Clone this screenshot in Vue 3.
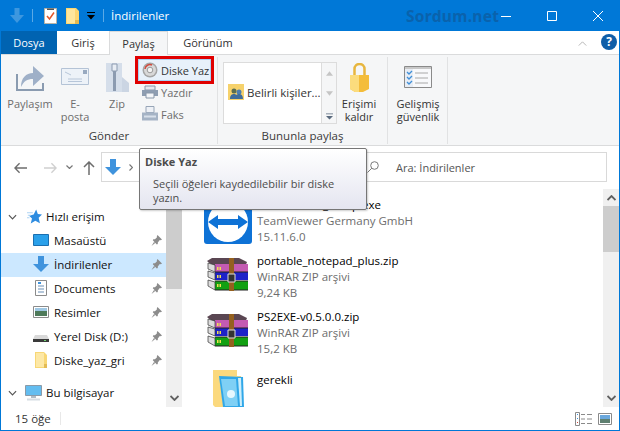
<script setup>
const sideRows = [
  { key: 'desk', label: 'Masaüstü', pin: true },
  { key: 'down', label: 'İndirilenler', pin: true, active: true },
  { key: 'docs', label: 'Documents', pin: true },
  { key: 'pics', label: 'Resimler', pin: true },
  { key: 'disk', label: 'Yerel Disk (D:)', pin: true },
  { key: 'fold', label: 'Diske_yaz_gri', pin: true }
]
const files = [
  { key: 'tv', name: 'TeamViewer_Setup.exe', lines: ['TeamViewer Germany GmbH', '15.11.6.0'] },
  { key: 'rar', name: 'portable_notepad_plus.zip', lines: ['WinRAR ZIP arşivi', '9,24 KB'] },
  { key: 'rar', name: 'PS2EXE-v0.5.0.0.zip', lines: ['WinRAR ZIP arşivi', '15,2 KB'] },
  { key: 'dir', name: 'gerekli', lines: [] }
]
</script>

<template>
  <div class="window">
    <header class="titlebar">
      <svg class="qa qa-arrow" viewBox="0 0 14 15"><path d="M4.500 0h5v7H14L7 15 0 7h4.500z" fill="#3d97df"/></svg>
      <span class="qa-sep"></span>
      <svg class="qa qa-note" viewBox="0 0 13 16"><path d="M.5.5h12v15H.5z" fill="#fff" stroke="#b9b4a8"/><path d="M3 8l2.500 3L10 4.500" fill="none" stroke="#e2572b" stroke-width="1.500"/><path d="M3 .5h7v1.500H3z" fill="#555"/></svg>
      <svg class="qa qa-folder" viewBox="0 0 13 16"><path d="M0 0h10l3 3v13H0z" fill="#fcd671"/><path d="M1 1h8v14H1z" fill="#fde69d"/><path d="M9 12h4v4H9z" fill="#e5b84f"/></svg>
      <svg class="qa qa-drop" viewBox="0 0 8 8"><path d="M0 0h8v1H0zM0 3h8L4 7.500z" fill="#000"/></svg>
      <span class="qa-sep second"></span>
      <span class="title">İndirilenler</span>
      <span class="brand">Sordum.net</span>
      <div class="controls">
        <svg class="ctl" viewBox="0 0 46 30"><path d="M18 15.500h10" stroke="#fff" fill="none"/></svg>
        <svg class="ctl" viewBox="0 0 46 30"><path d="M18.500 10.500h9v9h-9z" stroke="#fff" fill="none"/></svg>
        <svg class="ctl" viewBox="0 0 46 30"><path d="M18 10l10 10M28 10L18 20" stroke="#fff" fill="none"/></svg>
      </div>
    </header>

    <nav class="tabs">
      <span class="tab tab-file">Dosya</span>
      <span class="tab giris">Giriş</span>
      <span class="tab current">Paylaş</span>
      <span class="tab gorunum">Görünüm</span>
      <svg class="collapse" viewBox="0 0 10 6"><path d="M.5 5.500L5 1l4.500 4.500" fill="none" stroke="#a9a9a9"/></svg>
      <span class="help">?</span>
    </nav>

    <section class="ribbon">
      <div class="group send">
        <div class="group-body">
          <div class="big dim w-share">
            <svg class="big-ic share" viewBox="0 0 28 28"><path d="M1 11v16h26v-7" fill="none" stroke="#8a9bb0" stroke-width="2"/><path d="M5 24c0-9 5-14 12-14V3l11 10-11 10v-7c-6 0-9 2-12 8z" fill="#9fb0c8"/></svg>
            <span>Paylaşım</span>
          </div>
          <div class="big dim w-mail">
            <svg class="big-ic mail" viewBox="0 0 28 17"><path d="M.5.500h27v16H.5z" fill="#edf2f8" stroke="#b4c3d6"/><path d="M22 2h4v4h-4z" fill="#98a9c0"/><path d="M4 4l6 3M7 11h14M7 13.500h14" stroke="#b7c6d9" fill="none"/></svg>
            <span>E-<br>posta</span>
          </div>
          <div class="big dim w-zip">
            <svg class="big-ic zip" viewBox="0 0 23 29"><path d="M0 0h16v29H0z" fill="#d5deea"/><path d="M16 14l7 6v9h-7z" fill="#cbd5e3"/><path d="M7 1h3v27H7z" fill="#8c9bb0"/><path d="M6 1h5v7H6z" fill="#e8edf4" stroke="#8c9bb0"/></svg>
            <span>Zip</span>
          </div>
          <div class="small-col">
            <div class="burn-frame">
              <div class="burn">
                <svg class="small-ic" viewBox="0 0 16 16"><circle cx="8" cy="8" r="7.500" fill="#a5a5a5"/><circle cx="8" cy="8" r="6" fill="#d8d8d8"/><path d="M3 7a5 5 0 0 1 7-4" fill="none" stroke="#d04a3e" stroke-width="1.500"/><circle cx="8" cy="8" r="2.800" fill="#f3f3f3" stroke="#999"/></svg>
                <span>Diske Yaz</span>
              </div>
            </div>
            <div class="small dim first">
              <svg class="small-ic" viewBox="0 0 16 14"><path d="M3 1h10v4H3z" fill="#e4e9f0" stroke="#8896a8"/><path d="M0 5h16v6H0z" fill="#8e9db1"/><path d="M4 8h8v5H4z" fill="#f3f5f8" stroke="#8896a8"/></svg>
              <span>Yazdır</span>
            </div>
            <div class="small dim">
              <svg class="small-ic" viewBox="0 0 16 15"><path d="M4 0h8v6H4z" fill="#eef1f6" stroke="#97a5b7"/><path d="M0 6h16v8H0z" fill="#a5b3c5"/><path d="M2 9h12v2H2z" fill="#d8e0ea"/></svg>
              <span>Faks</span>
            </div>
          </div>
        </div>
        <div class="group-label">Gönder</div>
      </div>

      <div class="group people">
        <div class="group-body">
          <div class="gallery">
            <div class="gallery-main">
              <svg class="small-ic" viewBox="0 0 16 16"><path d="M0 0h16v16H0z" fill="#f6d26c"/><circle cx="6" cy="7" r="2.500" fill="#5b6e50"/><circle cx="11" cy="8" r="2.500" fill="#4c7db0"/><path d="M2 15c0-4 2-5 4-5s3 1 3 5zM7 15c0-4 2-5 4-5s4 1 4 5z" fill="#3e6c9c"/></svg>
              <span>Belirli kişiler...</span>
            </div>
            <div class="gallery-scroll">
              <svg viewBox="0 0 8 5" class="gs"><path d="M4 0l4 5H0z" fill="#c5c5c5"/></svg>
              <svg viewBox="0 0 8 5" class="gs"><path d="M0 0h8L4 5z" fill="#c5c5c5"/></svg>
              <svg viewBox="0 0 8 7" class="gs last"><path d="M0 0h8v1H0zM0 3h8L4 7z" fill="#5a6a7e"/></svg>
            </div>
          </div>
          <div class="big w-lock">
            <svg class="big-ic lock" viewBox="0 0 19 29"><path d="M4.500 13V6a5 5 0 0 1 10 0v7" fill="none" stroke="#e7b63f" stroke-width="2.500"/><path d="M0 12h19v14l-6 3H5l-5-3z" fill="#f4bd3b"/><path d="M0 12h9v17H5l-5-3z" fill="#fbdc7d"/></svg>
            <span>Erişimi<br>kaldır</span>
          </div>
        </div>
        <div class="group-label">Bununla paylaş</div>
      </div>

      <div class="group security">
        <div class="group-body">
          <div class="big w-sec">
            <svg class="big-ic sec" viewBox="0 0 28 22"><path d="M.5.500h27v21H.5z" fill="#f8f9fb" stroke="#8a8a8a"/><path d="M1 1h26v2H1z" fill="#c8c8c8"/><path d="M1 3h8v18H1z" fill="#e8edf4"/><path d="M3 6l2 2 3-3M3 11l2 2 3-3M3 16l2 2 3-3" fill="none" stroke="#3f8fd8" stroke-width="1.300"/><path d="M11 7h13M11 12h13M11 17h13" stroke="#a8a8a8"/></svg>
            <span>Gelişmiş<br>güvenlik</span>
          </div>
        </div>
        <div class="group-label"></div>
      </div>
    </section>

    <div class="navbar">
      <svg class="nav-ic back" viewBox="0 0 14 12"><path d="M6 1L1 6l5 5M1 6h13" fill="none" stroke="#6d6d6d" stroke-width="1.500"/></svg>
      <svg class="nav-ic fwd" viewBox="0 0 14 12"><path d="M8 1l5 5-5 5M13 6H0" fill="none" stroke="#d0d0d0" stroke-width="1.500"/></svg>
      <svg class="nav-chev" viewBox="0 0 7 4"><path d="M.5.500L3.500 3.500 6.500.5" fill="none" stroke="#777" stroke-width="1.200"/></svg>
      <svg class="nav-ic up" viewBox="0 0 12 14"><path d="M1 6l5-5 5 5M6 1v13" fill="none" stroke="#6d6d6d" stroke-width="1.500"/></svg>
      <div class="address">
        <svg class="addr-arrow" viewBox="0 0 16 16"><path d="M5 0h6v8h5l-8 8-8-8h5z" fill="#3f93dd"/></svg>
        <svg class="addr-chev" viewBox="0 0 4 7"><path d="M.5.500l3 3-3 3" fill="none" stroke="#777" stroke-width="1.200"/></svg>
      </div>
      <div class="search">
        <svg class="search-ic" viewBox="0 0 12 12"><circle cx="7.500" cy="4.500" r="3.800" fill="none" stroke="#7a7a7a"/><path d="M4.800 7.200L.5 11.500" stroke="#7a7a7a" fill="none"/></svg>
        <span>Ara: İndirilenler</span>
      </div>
    </div>

    <main class="content">
      <aside class="sidebar">
        <div class="tree">
          <div class="row head">
            <svg class="twist" viewBox="0 0 10 6"><path d="M1 1l4 4 4-4" fill="none" stroke="#555" stroke-width="1.300"/></svg>
            <svg class="ic-star" viewBox="0 0 18 17"><path d="M11 0l2 5.500 5 .5-4 4 1.500 6.500L10 13.500 4.500 17 6 11 2.500 7.500 8 6z" fill="#2e8ce0"/><path d="M0 4h7M1 7h4M0 10h3" stroke="#9ccbf2"/></svg>
            <span class="hl">Hızlı erişim</span>
          </div>
          <div v-for="r in sideRows" :key="r.key" class="row item" :class="{ active: r.active }">
            <span class="ic-box">
              <svg v-if="r.key === 'desk'" class="ic" viewBox="0 0 16 16"><path d="M.5 2.500h15v11H.5z" fill="#2aa0ea" stroke="#1b6fb0"/></svg>
              <svg v-else-if="r.key === 'down'" class="ic" viewBox="0 0 16 16"><path d="M5 0h6v8h5l-8 8-8-8h5z" fill="#3f93dd"/></svg>
              <svg v-else-if="r.key === 'docs'" class="ic" viewBox="0 0 16 16"><path d="M2.500.5h11v15h-11z" fill="#fff" stroke="#8b8b8b"/><path d="M5 6h6M5 9h6M5 12h6" stroke="#6b8fb5"/><path d="M5 2h3v2H5z" fill="#3f93dd"/></svg>
              <svg v-else-if="r.key === 'pics'" class="ic" viewBox="0 0 16 16"><path d="M.5 2.500h15v11H.5z" fill="#fff" stroke="#8b8b8b"/><path d="M2 4h12v3H2z" fill="#9fc8e4"/><path d="M2 7h12v5H2z" fill="#4e7a5a"/></svg>
              <svg v-else-if="r.key === 'disk'" class="ic" viewBox="0 0 16 16"><path d="M2 7h12l2 4H0z" fill="#d9d9d9"/><path d="M0 11h16v3H0z" fill="#3a3a3a"/><path d="M11 12h2v1h-2z" fill="#6fd36f"/></svg>
              <svg v-else class="ic" viewBox="0 0 16 16"><path d="M2 0h9l3 3v13H2z" fill="#f8d775"/><path d="M3 1h8v14H3z" fill="#fde8a6"/><path d="M11 12h3v4h-3z" fill="#e3bb54"/></svg>
            </span>
            <span class="lbl">{{ r.label }}</span>
            <svg class="pin" viewBox="0 0 11 11"><path d="M6.500 0L11 4.500 9.800 5.200 8.800 5 6.800 7.500 6.800 9 5.800 9.500 1.800 5.300 2.300 4.300 4 4.200 6 2.200 5.800 1.200zM3 7l1.200 1L.5 11z" fill="#8c8c8c"/></svg>
          </div>
          <div class="row head pc">
            <svg class="twist" viewBox="0 0 10 6"><path d="M1 1l4 4 4-4" fill="none" stroke="#555" stroke-width="1.300"/></svg>
            <svg class="ic-pc" viewBox="0 0 18 16"><path d="M.5.500h16v10H.5z" fill="#63bdf0" stroke="#8a9aa8"/><path d="M6 11h5v2H6z" fill="#b0bcc6"/><path d="M2 13.500h13v2H2z" fill="#d5dce2"/></svg>
            <span class="hl">Bu bilgisayar</span>
          </div>
        </div>
        <div class="vscroll side-scroll">
          <svg class="arrow-up" viewBox="0 0 9 6"><path d="M.5 5L4.500 1l4 4" fill="none" stroke="#606060" stroke-width="1.800"/></svg>
          <div class="thumb"></div>
          <svg class="arrow-dn" viewBox="0 0 9 6"><path d="M.5 1l4 4 4-4" fill="none" stroke="#606060" stroke-width="1.800"/></svg>
        </div>
      </aside>

      <section class="files">
        <div class="file-list">
          <article v-for="f in files" :key="f.name" class="entry" :class="'kind-' + f.key">
            <div class="file-ic">
              <svg v-if="f.key === 'tv'" class="tv" viewBox="0 0 48 48"><rect width="48" height="48" rx="3" fill="#0e72d6"/><circle cx="24" cy="26" r="20" fill="#fff"/><path d="M4 26l10-7v4h20v-4l10 7-10 7v-4H14v4z" fill="#0e72d6"/></svg>
              <svg v-else-if="f.key === 'rar'" class="rar" viewBox="0 0 42 34"><path d="M0 4l5-3h27l8 4-2 5H7z" fill="#5a4652"/><path d="M8 7h33v8H8z" fill="#c45bb2"/><path d="M8 15h33v8H8z" fill="#1d22c8"/><path d="M8 24h33v9H8z" fill="#12a012"/><path d="M8 15h33M8 24h33M8 33h33" stroke="#222"/><path d="M1 6l7 2v7L1 12zM1 14l7 2v7l-7-3zM1 23l7 2v8l-7-4z" fill="#dcdcdc" stroke="#333" stroke-width=".7"/><path d="M22 1h5v33h-5z" fill="#94601f"/><path d="M21 17h7v8h-7z" fill="#333" stroke="#ddd"/><path d="M10 10h1.500v3H10zM12.500 10H14v3h-1.500zM10 18h1.500v3H10zM12.500 18H14v3h-1.500zM10 27h1.500v3H10zM12.500 27H14v3h-1.500z" fill="#f0e050"/></svg>
              <svg v-else class="dir" viewBox="0 0 31 37"><path d="M0 0h24v6h4v31H2L0 35z" fill="#fbd97e"/><path d="M6 6l24 1 1 30H10z" fill="#30a7e8"/><path d="M8 9h15l2 27H12z" fill="#7fd0f5"/><path d="M25 8h3l1 28h-2z" fill="#cdeefb"/><circle cx="18" cy="24" r="4" fill="#e6f7fe"/></svg>
            </div>
            <div class="file-text">
              <div class="name">{{ f.name }}</div>
              <div v-for="l in f.lines" :key="l" class="meta">{{ l }}</div>
            </div>
          </article>
        </div>
        <div class="vscroll main-scroll">
          <svg class="arrow-up" viewBox="0 0 9 6"><path d="M.5 5L4.500 1l4 4" fill="none" stroke="#606060" stroke-width="1.800"/></svg>
          <div class="thumb"></div>
          <svg class="arrow-dn" viewBox="0 0 9 6"><path d="M.5 1l4 4 4-4" fill="none" stroke="#606060" stroke-width="1.800"/></svg>
        </div>
      </section>
    </main>

    <footer class="status">
      <span class="count">15 öğe</span>
      <span class="status-sep"></span>
      <svg class="view v1" viewBox="0 0 17 14"><path d="M.5.500h4v13h-4z" fill="#fff" stroke="#8a8a8a"/><path d="M2 2h1v1H2zM2 6h1v1H2z" fill="#3f93dd"/><path d="M2 10h1v1H2z" fill="#d04a3e"/><path d="M6 2.500h4M12 2.500h5M6 7h4M12 7h5M6 11.500h4M12 11.500h5" stroke="#8a8a8a"/></svg>
      <svg class="view v2" viewBox="0 0 14 12"><path d="M.5.500h13v11H.5z" fill="#fff" stroke="#8a8a8a"/><path d="M2 2h10v4H2z" fill="#6aa7dc"/><path d="M2 6h10v4H2z" fill="#5f7f70"/></svg>
    </footer>

    <div class="tooltip">
      <div class="tip-title">Diske Yaz</div>
      <div class="tip-body">Seçili öğeleri kaydedilebilir bir diske<br>yazın.</div>
    </div>
  </div>
</template>

<style scoped>
.window {
  position: relative;
  width: 620px;
  height: 431px;
  box-sizing: border-box;
  border: 1px solid #0078d7;
  border-top: 0;
  display: flex;
  flex-direction: column;
  overflow: hidden;
  background: #fff;
  font-family: "Open Sans", "Noto Sans", sans-serif;
  font-size: 11.5px;
  color: #1a1a1a;
}
.titlebar {
  height: 31px;
  flex: none;
  background: #0078d7;
  display: flex;
  align-items: center;
  margin: 0 -1px;
  color: #fff;
}
.qa { display: block; flex: none; }
.qa-arrow { width: 14px; height: 15px; margin-left: 10px; }
.qa-sep { width: 1px; height: 13px; background: #5aa9e6; margin-left: 8px; flex: none; }
.qa-note { width: 13px; height: 16px; margin-left: 11px; }
.qa-folder { width: 13px; height: 16px; margin-left: 9px; }
.qa-drop { width: 8px; height: 8px; margin-left: 8px; }
.qa-sep.second { margin-left: 8px; }
.title { margin-left: 7px; font-size: 11.5px; width: 62px; flex: none; white-space: nowrap; }
.brand {
  margin-left: 233px;
  font-size: 15.500px;
  font-weight: 700;
  color: #0a62ac;
  font-family: "Noto Sans", sans-serif;
  letter-spacing: .3px;
  width: 77px;
  flex: none;
  white-space: nowrap;
}
.controls { display: flex; margin-left: auto; flex: none; }
.ctl { width: 46px; height: 30px; display: block; }
.tabs {
  height: 24px;
  flex: none;
  display: flex;
  align-items: stretch;
  border-bottom: 1px solid #dadbdc;
  box-sizing: border-box;
  font-size: 11px;
}
.tab { display: flex; align-items: center; justify-content: center; color: #333; }
.tab-file { width: 56px; height: 23px; background: #0063b1; color: #fff; }
.giris { width: 52px; }
.current {
  width: 59px;
  box-sizing: border-box;
  height: 24px;
  background: #f5f6f7;
  border: 1px solid #dadbdc;
  border-bottom: 0;
}
.gorunum { width: 80px; }
.collapse { width: 9px; height: 5px; margin: 10px 0 0 auto; }
.help {
  width: 16px;
  height: 16px;
  border-radius: 50%;
  background: #0f5ea8;
  color: #fff;
  font: 700 12px/16px "Open Sans", sans-serif;
  text-align: center;
  margin: 3px 2px 0 14px;
}
.ribbon {
  height: 91px;
  flex: none;
  box-sizing: border-box;
  background: #f5f6f7;
  border-bottom: 1px solid #dadbdc;
  display: flex;
  padding-top: 2px;
}
.group {
  display: flex;
  flex-direction: column;
  border-right: 1px solid #e1e2e3;
  box-sizing: border-box;
  height: 87px;
}
.send { width: 217px; }
.people { width: 170px; }
.security { width: 60px; }
.group-body { flex: 1; display: flex; min-height: 0; }
.group-label { height: 16px; line-height: 16px; text-align: center; color: #3b3b3b; font-size: 11.5px; flex: none; }
.big {
  display: flex;
  flex-direction: column;
  align-items: center;
  text-align: center;
  line-height: 13px;
  padding-top: 6px;
  box-sizing: border-box;
  color: #333;
  font-size: 11px;
  flex: none;
}
.big span { margin-top: auto; height: 31px; white-space: nowrap; }
.dim { color: #6d6d6d; }
.big-ic { display: block; flex: none; }
.w-share { width: 58px; }
.w-mail { width: 32px; }
.w-zip { width: 26px; margin-left: 13px; }
.share { width: 28px; height: 28px; }
.mail { width: 28px; height: 17px; margin-top: 5px; }
.zip { width: 23px; height: 29px; }
.small-col { width: 80px; margin-left: 5px; font-size: 11px; flex: none; }
.burn-frame {
  width: 79px;
  height: 28px;
  box-sizing: border-box;
  border: 3px solid #e00000;
  margin-top: -1px;
}
.burn {
  height: 22px;
  box-sizing: border-box;
  background: #e8f1fa;
  border: 1px solid #a9d1f2;
  display: flex;
  align-items: center;
  gap: 3px;
  padding-left: 3px;
  color: #333;
  white-space: nowrap;
}
.small {
  display: flex;
  align-items: center;
  gap: 3px;
  height: 22px;
  padding-left: 7px;
  white-space: nowrap;
}
.small.first { margin-top: -3px; }
.small-ic { width: 16px; height: 16px; display: block; flex: none; }
.gallery {
  width: 114px;
  height: 62px;
  margin: 5px 0 0 5px;
  display: flex;
  box-sizing: border-box;
  border: 1px solid #dcdcdc;
  background: #fff;
  flex: none;
}
.gallery-main { flex: 1; display: flex; align-items: center; gap: 3px; padding: 0 0 2px 4px; white-space: nowrap; color: #333; min-width: 0; font-size: 11.5px; }
.gallery-scroll { width: 14px; background: #f5f6f7; border-left: 1px solid #dcdcdc; display: flex; flex-direction: column; align-items: center; flex: none; padding-top: 8px; }
.gs { width: 7px; height: 5px; display: block; margin-bottom: 15px; }
.gs.last { height: 7px; margin: 2px 0 0; }
.w-lock { width: 44px; }
.lock { width: 19px; height: 29px; }
.w-sec { width: 60px; }
.sec { width: 28px; height: 22px; margin-top: 3px; }
.navbar {
  height: 43px;
  flex: none;
  box-sizing: border-box;
  padding-top: 6px;
  display: flex;
  align-items: flex-start;
  background: #fff;
}
.nav-ic { display: block; flex: none; }
.back { width: 13px; height: 12px; margin: 10px 0 0 13px; }
.fwd { width: 13px; height: 12px; margin: 10px 0 0 17px; }
.nav-chev { width: 7px; height: 4px; margin: 13px 0 0 9px; flex: none; }
.up { width: 12px; height: 14px; margin: 9px 0 0 10px; }
.address {
  width: 253px;
  height: 30px;
  margin-left: 6px;
  box-sizing: border-box;
  border: 1px solid #d9d9d9;
  display: flex;
  align-items: center;
  flex: none;
}
.addr-arrow { width: 16px; height: 16px; margin-left: 3px; }
.addr-chev { width: 4px; height: 7px; margin-left: 8px; }
.search {
  flex: 1;
  height: 30px;
  margin: 0 12px 0 8px;
  box-sizing: border-box;
  border: 1px solid #d9d9d9;
  display: flex;
  align-items: center;
  padding-left: 4px;
  color: #555;
  font-size: 11px;
}
.search-ic { width: 12px; height: 12px; flex: none; }
.search span { margin-left: 17px; }
.content { flex: 1; min-height: 0; display: flex; }
.sidebar { width: 181px; display: flex; flex: none; }
.tree { width: 165px; padding-top: 16px; box-sizing: border-box; }
.row { height: 24px; display: flex; align-items: center; white-space: nowrap; color: #111; }
.head .twist { width: 9px; height: 6px; margin-left: 7px; flex: none; }
.ic-star { width: 15px; height: 15px; margin: -2px 0 0 10px; flex: none; }
.hl { margin-left: 4px; margin-top: -2px; }
.pc { margin-top: 8px; }
.ic-pc { width: 18px; height: 16px; margin-left: 8px; flex: none; }
.pc .hl { margin-left: 3px; }
.item { padding-left: 32px; width: 165px; box-sizing: border-box; }
.item.active { background: #cce8ff; }
.ic-box { width: 16px; height: 16px; flex: none; margin-top: -2px; }
.ic { width: 16px; height: 16px; display: block; }
.lbl { margin-left: 5px; margin-top: -2px; }
.pin { width: 11px; height: 11px; margin: -1px 4px 0 auto; flex: none; }
.vscroll {
  width: 16px;
  flex: none;
  background: #f0f0f0;
  display: flex;
  flex-direction: column;
  align-items: center;
  box-sizing: border-box;
}
.arrow-up { width: 9px; height: 6px; margin: 6px 0 5px; flex: none; }
.thumb { width: 100%; background: #cdcdcd; flex: none; }
.arrow-dn { width: 9px; height: 6px; margin: auto 0 6px; flex: none; }
.side-scroll .thumb { height: 83px; }
.main-scroll .thumb { height: 46px; }
.files { flex: 1; display: flex; min-width: 0; }
.file-list { flex: 1; min-width: 0; padding: 8px 0 0 22px; overflow: hidden; }
.entry { height: 56px; display: flex; }
.file-ic { width: 48px; flex: none; display: flex; align-items: flex-start; justify-content: center; }
.tv { width: 48px; height: 48px; display: block; margin-top: -1px; }
.rar { width: 42px; height: 34px; display: block; margin-top: 4px; }
.dir { width: 31px; height: 37px; display: block; margin-top: 5px; }
.file-text { margin-left: 5px; line-height: 16px; white-space: nowrap; font-size: 11.5px; }
.kind-dir .file-text { padding-top: 7px; }
.name { color: #000; }
.meta { color: #6d6d6d; }
.status {
  height: 23px;
  flex: none;
  display: flex;
  align-items: center;
  color: #333;
  font-size: 11.5px;
}
.count { margin-left: 14px; width: 45px; }
.status-sep { width: 1px; height: 13px; background: #e8e8e8; }
.view { display: block; flex: none; }
.v1 { width: 17px; height: 14px; margin-left: auto; margin-right: 6px; }
.v2 { width: 14px; height: 12px; margin-right: 7px; }
.tooltip {
  position: absolute;
  left: 138px;
  top: 148px;
  width: 228px;
  height: 62px;
  box-sizing: border-box;
  border: 1px solid #767676;
  border-radius: 2px;
  background: linear-gradient(#fff, #e4e5f0);
  padding: 5px 0 0 5px;
  color: #4c4c4c;
  box-shadow: 1px 1px 2px rgba(0, 0, 0, .2);
  font-size: 11px;
}
.tip-title { font-weight: 700; line-height: 16px; }
.tip-body { margin: 7px 0 0 8px; line-height: 14px; white-space: nowrap; }
</style>
